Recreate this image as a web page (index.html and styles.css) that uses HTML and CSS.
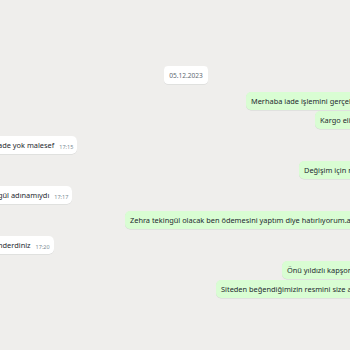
FILE: index.html
```html
<!DOCTYPE html>
<html lang="tr">
<head>
<meta charset="utf-8">
<title>Sohbet</title>
<link rel="stylesheet" href="styles.css">
</head>
<body>
<main class="chat">
  <div class="row center"><span class="date">05.12.2023</span></div>

  <div class="row out first"><div class="bubble green m-merhaba">Merhaba iade işlemini gerçekleştirmek istiyorum</div></div>
  <div class="row out"><div class="bubble green m-kargo">Kargo elimde</div></div>

  <div class="row in first"><div class="bubble white m-in1"><span class="msg">ade yok malesef</span><span class="time">17:15</span></div></div>

  <div class="row out first"><div class="bubble green m-degisim">Değişim için ne yapmalıyım</div></div>

  <div class="row in first"><div class="bubble white m-in2"><span class="msg">gül adınamıydı</span><span class="time">17:17</span></div></div>

  <div class="row out first"><div class="bubble green m-zehra">Zehra tekingül olacak ben ödemesini yaptım diye hatırlıyorum.ama</div></div>

  <div class="row in first"><div class="bubble white m-in3"><span class="msg">nderdiniz</span><span class="time">17:20</span></div></div>

  <div class="row out first"><div class="bubble green m-onu">Önü yıldızlı kapşonlu</div></div>
  <div class="row out"><div class="bubble green m-siteden">Siteden beğendiğimizin resmini size atmıştık</div></div>
</main>
</body>
</html>
```
FILE: styles.css
```css
html, body {
  margin: 0;
  padding: 0;
  width: 350px;
  height: 350px;
  overflow: hidden;
  background: #efeeec;
}

.chat {
  display: flex;
  flex-direction: column;
  padding-top: 66px;
  font-family: "Noto Sans", "Open Sans", sans-serif;
  font-size: 7.4px;
  color: #1f2a30;
}

.row {
  display: flex;
  margin-top: 1px;
}

.row.first {
  margin-top: 7px;
}

.row.center {
  justify-content: center;
  margin-top: 0;
  margin-left: 22px;
  margin-bottom: 1px;
}

.date {
  display: flex;
  align-items: center;
  height: 18px;
  padding: 0 5px;
  background: #ffffff;
  border-radius: 4px;
  color: #5f6b73;
  font-size: 6.6px;
  box-shadow: 0 0.5px 0.6px rgba(11, 20, 26, 0.12);
}

.bubble {
  display: flex;
  align-items: center;
  height: 18px;
  padding: 0 5px;
  border-radius: 5px;
  white-space: nowrap;
  box-shadow: 0 0.5px 0.6px rgba(11, 20, 26, 0.12);
  flex: none;
}

.green {
  background: #d9fdd3;
}

.white {
  background: #ffffff;
  padding-right: 4px;
}

.time {
  align-self: flex-end;
  margin-left: 5px;
  margin-bottom: 3px;
  font-size: 5.5px;
  color: #7b8a93;
}

.m-merhaba { margin-left: 246px; }
.m-kargo { margin-left: 315px; }
.m-degisim { margin-left: 299px; }
.m-zehra { margin-left: 125px; }
.m-onu { margin-left: 282px; }
.m-siteden { margin-left: 216px; }

.m-in1 { margin-left: -7px; }
.m-in2 { margin-left: -7px; }
.m-in3 { margin-left: -7px; }
```
